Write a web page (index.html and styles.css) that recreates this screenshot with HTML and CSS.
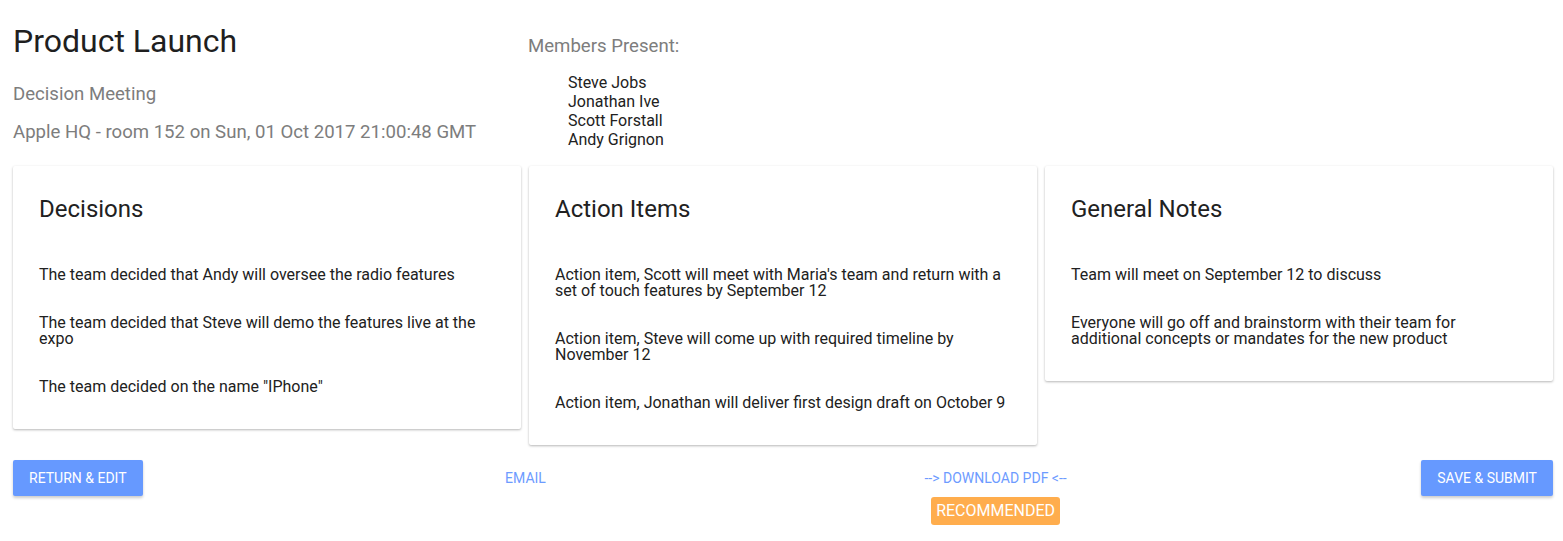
FILE: index.html
```html
<!DOCTYPE html>
<html lang="en">
<head>
<meta charset="utf-8">
<title>Product Launch</title>
<link rel="stylesheet" href="styles.css">
</head>
<body>
<div class="page">
  <header class="header">
    <div class="info">
      <h1 class="title">Product Launch</h1>
      <div class="sub">Decision Meeting</div>
      <div class="sub">Apple HQ - room 152 on Sun, 01 Oct 2017 21:00:48 GMT</div>
    </div>
    <div class="members">
      <div class="members-label">Members Present:</div>
      <ul class="member-list">
        <li>Steve Jobs</li>
        <li>Jonathan Ive</li>
        <li>Scott Forstall</li>
        <li>Andy Grignon</li>
      </ul>
    </div>
  </header>
  <section class="cards">
    <div class="card">
      <h2 class="card-title">Decisions</h2>
      <p class="item">The team decided that Andy will oversee the radio features</p>
      <p class="item">The team decided that Steve will demo the features live at the expo</p>
      <p class="item">The team decided on the name "IPhone"</p>
    </div>
    <div class="card">
      <h2 class="card-title">Action Items</h2>
      <p class="item">Action item, Scott will meet with Maria's team and return with a set of touch features by September 12</p>
      <p class="item">Action item, Steve will come up with required timeline by November 12</p>
      <p class="item">Action item, Jonathan will deliver first design draft on October 9</p>
    </div>
    <div class="card">
      <h2 class="card-title">General Notes</h2>
      <p class="item">Team will meet on September 12 to discuss</p>
      <p class="item">Everyone will go off and brainstorm with their team for additional concepts or mandates for the new product</p>
    </div>
  </section>
  <footer class="actions">
    <button class="btn btn-raised">Return &amp; Edit</button>
    <button class="btn btn-flat btn-email">Email</button>
    <div class="download">
      <button class="btn btn-flat">--&gt; Download PDF &lt;--</button>
      <span class="badge">RECOMMENDED</span>
    </div>
    <button class="btn btn-raised">Save &amp; Submit</button>
  </footer>
</div>
</body>
</html>
```
FILE: styles.css
```css
* { box-sizing: border-box; }
html, body { margin: 0; padding: 0; background: #fff; }
body {
  font-family: Roboto, "Liberation Sans", sans-serif;
  color: #212121;
}
.page {
  padding: 0 10px 0 13px;
}
.header {
  display: grid;
  grid-template-columns: 515px 1fr;
  padding-top: 22px;
  height: 160px;
}
.title {
  margin: 0;
  font-size: 32px;
  font-weight: 400;
  line-height: 38px;
  color: #1f1f1f;
}
.sub {
  font-size: 18.6px;
  color: #7d7d7d;
  line-height: 22px;
  margin-top: 23px;
}
.sub + .sub { margin-top: 16px; }
.members-label {
  font-size: 18.6px;
  color: #7d7d7d;
  line-height: 22px;
  margin-top: 13px;
}
.member-list {
  list-style: none;
  margin: 16px 0 0;
  padding: 0 0 0 40px;
  font-size: 16px;
  line-height: 19px;
  color: #212121;
}
.cards {
  display: grid;
  grid-template-columns: repeat(3, 508px);
  column-gap: 8px;
  align-items: start;
  margin-top: 6px;
}
.card {
  background: #fff;
  border-radius: 2px;
  box-shadow: 0 1px 3px rgba(0,0,0,0.18), 0 1px 2px rgba(0,0,0,0.12);
  padding: 29px 26px 34px;
}
.card-title {
  margin: 0 0 44px;
  font-size: 24px;
  font-weight: 400;
  line-height: 28px;
  color: #212121;
}
.item {
  margin: 0 0 32px;
  font-size: 16px;
  line-height: 16px;
  color: #212121;
}
.item:last-child { margin-bottom: 0; }
.actions {
  display: flex;
  justify-content: space-between;
  align-items: flex-start;
  margin-top: 15px;
}
.btn {
  font-family: Roboto, "Liberation Sans", sans-serif;
  font-size: 14px;
  font-weight: 400;
  text-transform: uppercase;
  height: 36px;
  padding: 0 16px;
  border: none;
  border-radius: 2px;
  background: transparent;
  cursor: pointer;
}
.btn-raised {
  background: #6699ff;
  color: #fff;
  box-shadow: 0 2px 3px rgba(0,0,0,0.2);
}
.btn-flat {
  color: #6d9bff;
}
.btn-email { margin-left: 8px; }
.download {
  display: flex;
  flex-direction: column;
  align-items: center;
  margin-left: 8px;
}
.badge {
  background: #ffad4d;
  color: #fff;
  font-size: 16px;
  font-weight: 400;
  line-height: 28px;
  padding: 0 5px;
  border-radius: 3px;
  margin-top: 1px;
}
```
